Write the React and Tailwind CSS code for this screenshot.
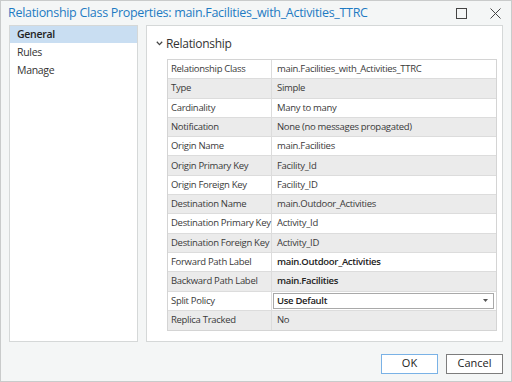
import React from 'react';

const rows = [
  { label: 'Relationship Class', value: 'main.Facilities_with_Activities_TTRC' },
  { label: 'Type', value: 'Simple' },
  { label: 'Cardinality', value: 'Many to many' },
  { label: 'Notification', value: 'None (no messages propagated)' },
  { label: 'Origin Name', value: 'main.Facilities' },
  { label: 'Origin Primary Key', value: 'Facility_Id' },
  { label: 'Origin Foreign Key', value: 'Facility_ID' },
  { label: 'Destination Name', value: 'main.Outdoor_Activities' },
  { label: 'Destination Primary Key', value: 'Activity_Id' },
  { label: 'Destination Foreign Key', value: 'Activity_ID' },
  { label: 'Forward Path Label', value: 'main.Outdoor_Activities', bold: true },
  { label: 'Backward Path Label', value: 'main.Facilities', bold: true },
  { label: 'Split Policy', select: 'Use Default' },
  { label: 'Replica Tracked', value: 'No' },
];

const App = () => {
  return (
    <div
      className="w-[512px] h-[382px] border border-[#c9cbcb] bg-[#f4f6f6] flex flex-col text-[#333]"
      style={{ fontFamily: '"Open Sans", "Noto Sans", sans-serif' }}
    >
      {/* title bar */}
      <div className="h-[24px] flex items-center pl-[7px] pr-[10px]">
        <span className="text-[12.5px] text-[#1e7bc3] tracking-[-0.3px]">
          Relationship Class Properties: main.Facilities_with_Activities_TTRC
        </span>
        <div className="ml-auto flex items-center gap-[23px]">
          <svg width="11" height="11" viewBox="0 0 11 11">
            <rect x="0.5" y="0.5" width="10" height="10" fill="none" stroke="#444" strokeWidth="1" />
          </svg>
          <svg width="11" height="11" viewBox="0 0 11 11">
            <path d="M0.5 0.5 L10.5 10.5 M10.5 0.5 L0.5 10.5" stroke="#444" strokeWidth="1" />
          </svg>
        </div>
      </div>

      <div className="flex gap-[8px] pl-[8px] pr-[8px] h-[317px]">
        {/* left nav */}
        <div className="w-[129px] bg-white border border-[#d5d8d8] text-[10.5px] tracking-[-0.3px]">
          <div className="h-[17px] bg-[#c9def2] flex items-center pl-[7px] font-semibold text-[#222]">General</div>
          <div className="h-[19px] flex items-center pl-[7px]">Rules</div>
          <div className="h-[18px] flex items-center pl-[7px]">Manage</div>
        </div>

        {/* right panel */}
        <div className="flex-1 bg-white border border-[#d5d8d8] pl-[20px] pr-[5px]">
          <div className="h-[33px] flex items-center -ml-[11px] gap-[3px] pt-[2px]">
            <svg width="7" height="5" viewBox="0 0 7 5">
              <path d="M0.8 0.8 L3.5 3.6 L6.2 0.8" fill="none" stroke="#444" strokeWidth="1.3" />
            </svg>
            <span className="text-[12px] text-[#333] tracking-[-0.3px]">Relationship</span>
          </div>
          <div className="border border-[#d4d4d4] text-[9.5px] tracking-[-0.3px] text-[#3a3a3a]">
            {rows.map((r, i) => (
              <div
                key={r.label}
                className={`grid grid-cols-[104px_1fr] h-[19.3px] border-b border-[#dcdcdc] last:border-b-0 ${
                  i % 2 === 1 ? 'bg-[#ebebeb]' : 'bg-white'
                }`}
              >
                <div className="flex items-center pl-[3px] border-r border-[#dcdcdc] whitespace-nowrap">{r.label}</div>
                {r.select ? (
                  <div className="flex items-center pl-[1px] pr-[2px] py-[1px]">
                    <div className="w-full h-full border border-[#a9a9a9] bg-white flex items-center pl-[3px] pr-[5px] font-semibold text-[#222]">
                      {r.select}
                      <svg className="ml-auto" width="5" height="3" viewBox="0 0 5 3">
                        <path d="M0 0 L5 0 L2.5 3 Z" fill="#555" />
                      </svg>
                    </div>
                  </div>
                ) : (
                  <div className={`flex items-center pl-[5px] ${r.bold ? 'font-semibold text-[#222]' : ''}`}>{r.value}</div>
                )}
              </div>
            ))}
          </div>
        </div>
      </div>

      {/* buttons */}
      <div className="flex-1 flex items-center justify-end gap-[8px] pr-[8px] pt-[4px]">
        <button className="w-[57px] h-[20px] bg-white border border-[#7ab2e6] text-[11px] text-[#222]">OK</button>
        <button className="w-[57px] h-[20px] bg-white border border-[#7d7d7d] text-[11px] text-[#222]">Cancel</button>
      </div>
    </div>
  );
};

export default App;
